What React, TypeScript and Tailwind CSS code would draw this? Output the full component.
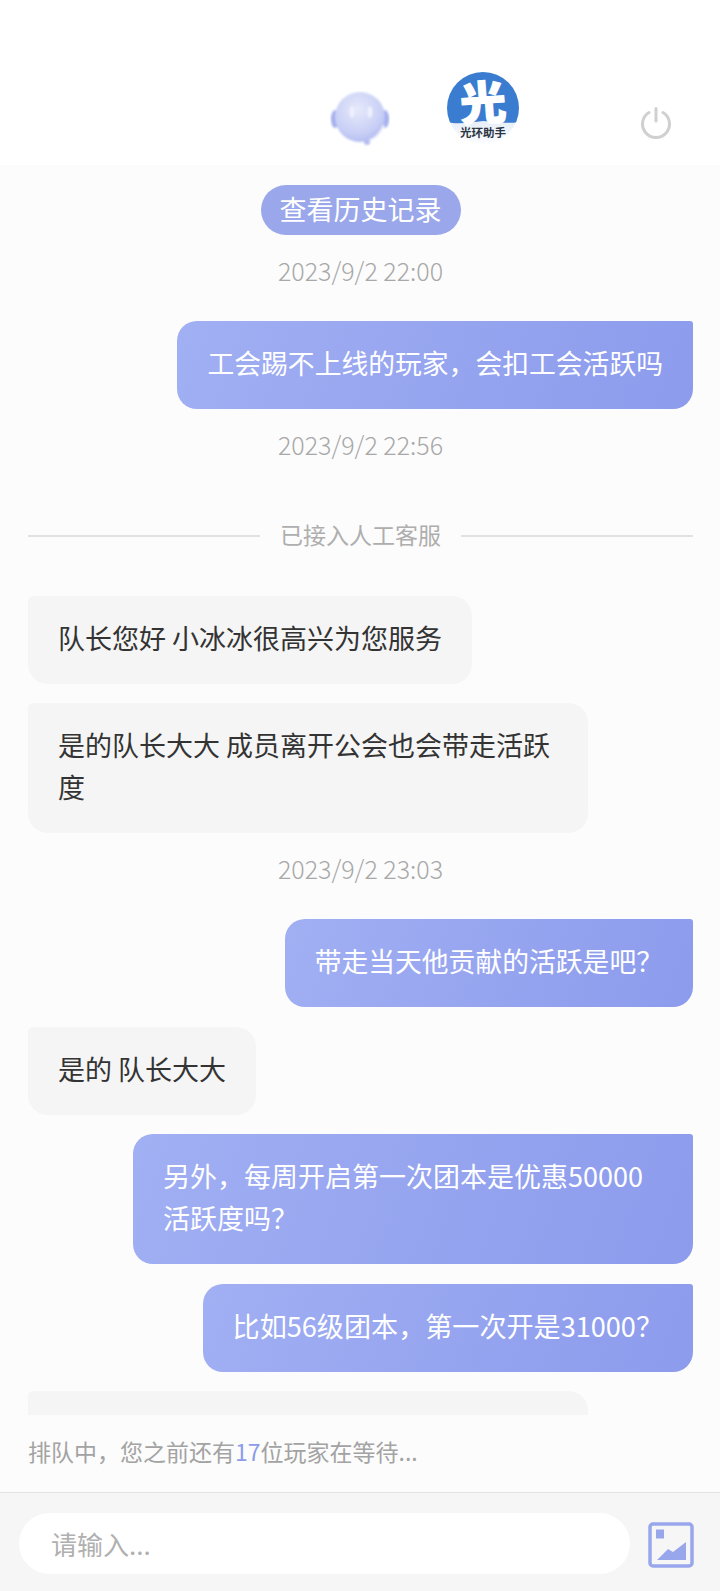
import React from "react";

const font = { fontFamily: '"Noto Sans CJK SC", "Noto Sans", sans-serif' };

function Time({ children }: { children: React.ReactNode }) {
  return <div className="-mt-[3px] mb-[14px] h-9 text-center text-[25px] font-light leading-9 text-[#a8a8a8]">{children}</div>;
}

function Me({ children, size }: { children: React.ReactNode; size: string }) {
  return (
    <div className="flex justify-end">
      <div className={`max-w-[560px] rounded-[20px] rounded-tr-[3px] bg-linear-[110deg] from-[#a1aff3] to-[#8c9bec] px-[30px] pb-[25px] pt-[21px] leading-[42px] text-white ${size}`}>
        {children}
      </div>
    </div>
  );
}

function Them({ children }: { children: React.ReactNode }) {
  return (
    <div className="flex justify-start">
      <div className="max-w-[560px] rounded-[20px] rounded-tl-[5px] bg-[#f5f5f5] px-[30px] pb-[25px] pt-[21px] text-[27px] leading-[42px] text-[#333333]">
        {children}
      </div>
    </div>
  );
}

function Robot() {
  return (
    <svg width="60" height="56" viewBox="0 0 60 56" className="block">
      <defs>
        <radialGradient id="rb" cx="45%" cy="35%" r="70%">
          <stop offset="0%" stopColor="#e6e9fb" />
          <stop offset="70%" stopColor="#c8cff5" />
          <stop offset="100%" stopColor="#aeb8ef" />
        </radialGradient>
        <filter id="bl"><feGaussianBlur stdDeviation="1" /></filter>
      </defs>
      <g filter="url(#bl)">
        <ellipse cx="5" cy="28" rx="4" ry="9" fill="#a3aeee" />
        <ellipse cx="55" cy="28" rx="4" ry="9" fill="#a3aeee" />
        <circle cx="30" cy="26" r="25" fill="url(#rb)" />
        <path d="M54 34 C50 44 44 48 38 50" fill="none" stroke="#eef0fc" strokeWidth="2" />
        <circle cx="37" cy="51" r="3" fill="#b4bdf0" />
        <ellipse cx="22" cy="21" rx="2.6" ry="6" fill="#eef0fc" />
        <ellipse cx="40" cy="21" rx="2.6" ry="6" fill="#eef0fc" />
      </g>
    </svg>
  );
}

function Logo() {
  return (
    <svg width="72" height="72" viewBox="0 0 72 72" className="block overflow-visible">
      <defs>
        <clipPath id="lc"><circle cx="36" cy="36" r="36" /></clipPath>
        <linearGradient id="lp" x1="0" y1="0" x2="0" y2="1">
          <stop offset="0%" stopColor="#e6eef8" />
          <stop offset="100%" stopColor="#fbfcfe" />
        </linearGradient>
      </defs>
      <g clipPath="url(#lc)">
        <rect y="48" width="72" height="24" fill="url(#lp)" />
        <path d="M0 0 H72 V50 C60 52 48 50 36 49 C24 50 12 53 0 50 Z" fill="#3a7cd0" />
      </g>
      <text x="36" y="48" textAnchor="middle" fontSize="46" fontWeight="900" fill="#ffffff" stroke="#ffffff" strokeWidth="1.2" style={font} transform="rotate(-4 36 30)">光</text>
      <text x="36" y="65" textAnchor="middle" fontSize="11.5" fontWeight="700" fill="#2b3442" style={font}>光环助手</text>
    </svg>
  );
}

function PowerIcon() {
  return (
    <svg width="32" height="32" viewBox="0 0 32 32" fill="none" stroke="#d0d0d0" strokeWidth="3" strokeLinecap="round" className="block">
      <path d="M9 5.5 A13.5 13.5 0 1 0 23 5.5" />
      <path d="M16 1.5 V14" />
    </svg>
  );
}

function ImageIcon() {
  return (
    <svg width="46" height="46" viewBox="0 0 46 46" className="block">
      <rect x="2" y="2" width="42" height="42" rx="3" fill="none" stroke="#98a6ec" strokeWidth="3.5" />
      <rect x="8" y="7.5" width="8" height="9" fill="#98a6ec" />
      <path d="M9 38 L20 27 L25 30 L38 20 V38 Z" fill="#98a6ec" />
    </svg>
  );
}

export default function App() {
  return (
    <div className="flex h-[1591px] w-[720px] flex-col overflow-hidden bg-white" style={font}>
      <header className="flex h-[165px] shrink-0 bg-white pl-[330px]">
        <div className="mt-[91px]"><Robot /></div>
        <div className="ml-[57px] mt-[72px]"><Logo /></div>
        <div className="ml-[121px] mt-[107px]"><PowerIcon /></div>
      </header>

      <main className="flex h-[1250px] shrink-0 flex-col gap-[19.5px] overflow-hidden bg-[#fcfcfc] pl-[28px] pr-[27px] pt-5">
        <div className="flex justify-center">
          <div className="flex h-[50px] w-[200px] items-center justify-center rounded-[25px] bg-[#9aa7ea] pb-[2px] text-[27px] text-white">查看历史记录</div>
        </div>
        <Time>2023/9/2 22:00</Time>
        <Me size="text-[26.8px]">工会踢不上线的玩家，会扣工会活跃吗</Me>
        <Time>2023/9/2 22:56</Time>
        <div className="mb-[25px] mt-[25.5px] flex h-9 items-center gap-5 text-[23px] text-[#aeaeae]">
          <div className="h-0.5 flex-1 bg-[#e2e2e2]" />
          <span className="-mt-[4px]">已接入人工客服</span>
          <div className="h-0.5 flex-1 bg-[#e2e2e2]" />
        </div>
        <Them>队长您好 小冰冰很高兴为您服务</Them>
        <Them>是的队长大大 成员离开公会也会带走活跃度</Them>
        <Time>2023/9/2 23:03</Time>
        <Me size="text-[26.8px]">带走当天他贡献的活跃是吧？</Me>
        <Them>是的 队长大大</Them>
        <Me size="text-[27px]">另外，每周开启第一次团本是优惠50000活跃度吗？</Me>
        <Me size="text-[27.1px]">比如56级团本，第一次开是31000？</Me>
        <Them><div className="h-[84px] w-[500px]" /></Them>
      </main>

      <div className="flex h-[77px] shrink-0 items-center bg-[#fcfcfc] pb-[4px] pl-[28px] text-[23px] text-[#a3a3a3]">
        排队中，您之前还有<span className="text-[#8c9bea]">17</span>位玩家在等待...
      </div>

      <footer className="flex flex-1 items-start border-t border-[#e4e4e4] bg-[#f6f6f6] pl-[19px] pt-[20px]">
        <div className="flex h-[61px] w-[611px] items-center rounded-[31px] bg-white pl-[32px] text-[26px] text-[#b0b0b0]">请输入...</div>
        <div className="ml-[18px] mt-[9px]"><ImageIcon /></div>
      </footer>
    </div>
  );
}
